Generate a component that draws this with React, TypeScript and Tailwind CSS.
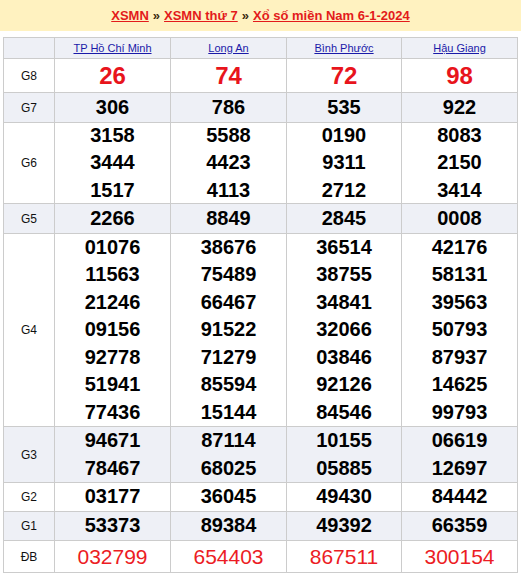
import React from "react";

type Row = { label: string; values: string[][]; h: number; alt: boolean; kind?: "g8" | "db" };

const rows: Row[] = [
  { label: "G8", values: [["26"], ["74"], ["72"], ["98"]], h: 34, alt: false, kind: "g8" },
  { label: "G7", values: [["306"], ["786"], ["535"], ["922"]], h: 30, alt: true },
  {
    label: "G6",
    values: [
      ["3158", "3444", "1517"],
      ["5588", "4423", "4113"],
      ["0190", "9311", "2712"],
      ["8083", "2150", "3414"],
    ],
    h: 81,
    alt: false,
  },
  { label: "G5", values: [["2266"], ["8849"], ["2845"], ["0008"]], h: 30, alt: true },
  {
    label: "G4",
    values: [
      ["01076", "11563", "21246", "09156", "92778", "51941", "77436"],
      ["38676", "75489", "66467", "91522", "71279", "85594", "15144"],
      ["36514", "38755", "34841", "32066", "03846", "92126", "84546"],
      ["42176", "58131", "39563", "50793", "87937", "14625", "99793"],
    ],
    h: 193,
    alt: false,
  },
  {
    label: "G3",
    values: [
      ["94671", "78467"],
      ["87114", "68025"],
      ["10155", "05885"],
      ["06619", "12697"],
    ],
    h: 56,
    alt: true,
  },
  { label: "G2", values: [["03177"], ["36045"], ["49430"], ["84442"]], h: 29, alt: false },
  { label: "G1", values: [["53373"], ["89384"], ["49392"], ["66359"]], h: 29, alt: true },
  { label: "ĐB", values: [["032799"], ["654403"], ["867511"], ["300154"]], h: 32, alt: false, kind: "db" },
];

const provinces = ["TP Hồ Chí Minh", "Long An", "Bình Phước", "Hậu Giang"];
const widths = ["w-[116px]", "w-[116px]", "w-[115px]", "w-[116px]"];

export default function App() {
  return (
    <div className="w-[521px] h-[573px] bg-white overflow-hidden" style={{ fontFamily: '"Liberation Sans", Arial, sans-serif' }}>
      <div className="h-[31px] bg-[#fff2c0] flex items-center justify-center text-[13px] font-bold">
        <a className="text-[#e31b1b] underline">XSMN</a>
        <span className="text-[#3a2a10] mx-[4px]">»</span>
        <a className="text-[#e31b1b] underline">XSMN thứ 7</a>
        <span className="text-[#3a2a10] mx-[4px]">»</span>
        <a className="text-[#e31b1b] underline">Xổ số miền Nam 6-1-2024</a>
      </div>
      <div className="h-[6px]" />
      <div className="ml-[3px] w-[515px] border-l border-t border-[#cccccc]">
        <div className="flex h-[21px] bg-[#eef0f6] border-b border-[#cccccc]">
          <div className="w-[51px] border-r border-[#cccccc]" />
          {provinces.map((p, i) => (
            <div key={p} className={`${widths[i]} border-r border-[#cccccc] flex items-center justify-center`}>
              <a className="text-[11px] text-[#1a1aa8] underline leading-none">{p}</a>
            </div>
          ))}
        </div>
        {rows.map((r) => (
          <div
            key={r.label}
            className={`flex border-b border-[#cccccc] ${r.alt ? "bg-[#eef0f6]" : "bg-white"}`}
            style={{ height: r.h }}
          >
            <div className="w-[51px] border-r border-[#cccccc] flex items-center justify-center text-[12px] text-[#111]">
              {r.label}
            </div>
            {r.values.map((col, i) => (
              <div key={i} className={`${widths[i]} border-r border-[#cccccc] flex flex-col items-center justify-center`}>
                {col.map((v, j) => (
                  <div
                    key={j}
                    className={
                      r.kind === "g8"
                        ? "text-[24px] font-bold text-[#e8141c] leading-[27px]"
                        : r.kind === "db"
                        ? "text-[21px] text-[#ec1c24] leading-[27px]"
                        : "text-[20px] font-bold text-black leading-[27.5px]"
                    }
                  >
                    {v}
                  </div>
                ))}
              </div>
            ))}
          </div>
        ))}
      </div>
      <div className="h-px bg-[#f5a623]" />
    </div>
  );
}
